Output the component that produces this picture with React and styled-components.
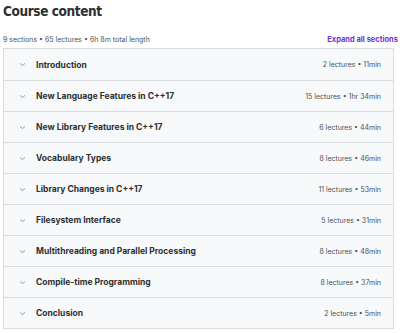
import styled, { createGlobalStyle } from "styled-components";

const sections = [
  { title: "Introduction", meta: "2 lectures • 11min" },
  { title: "New Language Features in C++17", meta: "15 lectures • 1hr 34min" },
  { title: "New Library Features in C++17", meta: "6 lectures • 44min" },
  { title: "Vocabulary Types", meta: "8 lectures • 46min" },
  { title: "Library Changes in C++17", meta: "11 lectures • 53min" },
  { title: "Filesystem Interface", meta: "5 lectures • 31min" },
  { title: "Multithreading and Parallel Processing", meta: "8 lectures • 48min" },
  { title: "Compile-time Programming", meta: "8 lectures • 37min" },
  { title: "Conclusion", meta: "2 lectures • 5min" },
];

export default function App() {
  return (
    <>
      <GlobalStyle />
      <Wrapper>
        <Title>Course content</Title>
        <SummaryRow>
          <Summary>9 sections • 65 lectures • 6h 8m total length</Summary>
          <ExpandAll>Expand all sections</ExpandAll>
        </SummaryRow>
        <List>
          {sections.map((s) => (
            <Row key={s.title}>
              <Chevron viewBox="0 0 10 6">
                <path d="M1.5 1.5 L5 4.5 L8.5 1.5" />
              </Chevron>
              <RowTitle>{s.title}</RowTitle>
              <Meta>{s.meta}</Meta>
            </Row>
          ))}
        </List>
      </Wrapper>
    </>
  );
}

const GlobalStyle = createGlobalStyle`
  body {
    margin: 0;
    background: #fff;
    font-family: Inter, "Liberation Sans", sans-serif;
    color: #2d2f31;
  }
`;

const Wrapper = styled.div`
  padding: 1px 6px 0 3px;
  width: 391px;
`;

const Title = styled.h2`
  margin: 0;
  font-family: "Liberation Sans Narrow", "DejaVu Sans Condensed", Inter, sans-serif;
  font-size: 13.5px;
  line-height: 20px;
  font-weight: 700;
  letter-spacing: -0.4px;
  color: #2d2f31;
`;

const SummaryRow = styled.div`
  display: flex;
  justify-content: space-between;
  align-items: center;
  margin-top: 11px;
  height: 14px;
`;

const Summary = styled.span`
  font-size: 7px;
  color: #4d5156;
`;

const ExpandAll = styled.span`
  font-size: 7.5px;
  font-weight: 700;
  color: #7132d6;
  margin-right: -4px;
`;

const List = styled.div`
  margin-top: 2px;
  border: 1px solid #d9dde0;
`;

const Row = styled.div`
  display: flex;
  align-items: center;
  height: 30px;
  padding: 0 12px 0 15px;
  background: #f7f9fa;
  border-top: 1px solid #d9dde0;
  &:first-child {
    border-top: none;
    height: 31px;
  }
`;

const Chevron = styled.svg`
  width: 7px;
  height: 5px;
  fill: none;
  stroke: #6a6f73;
  stroke-width: 1;
  margin-right: 10px;
`;

const RowTitle = styled.span`
  flex: 1;
  font-size: 8.5px;
  font-weight: 700;
  color: #2d2f31;
`;

const Meta = styled.span`
  font-size: 7px;
  color: #4d5156;
`;
